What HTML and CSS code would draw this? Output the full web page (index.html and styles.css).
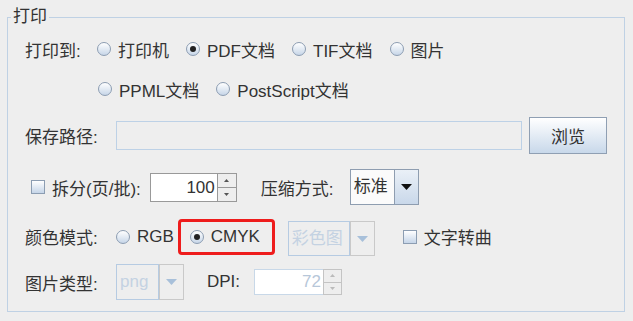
FILE: index.html
```html
<!DOCTYPE html>
<html lang="zh-CN">
<head>
  <meta charset="UTF-8">
  <title>打印</title>
  <link rel="stylesheet" href="styles.css">
</head>
<body>
  <fieldset class="print-box">
    <legend>打印</legend>

    <div class="row row-target">
      <span class="label label-target">打印到:</span>
      <label class="opt"><span class="radio"></span>打印机</label>
      <label class="opt"><span class="radio on"></span>PDF文档</label>
      <label class="opt"><span class="radio"></span>TIF文档</label>
      <label class="opt"><span class="radio"></span>图片</label>
    </div>

    <div class="row row-target2">
      <label class="opt"><span class="radio"></span>PPML文档</label>
      <label class="opt"><span class="radio"></span>PostScript文档</label>
    </div>

    <div class="row row-path">
      <span class="label">保存路径:</span>
      <div class="path-field"></div>
      <button class="btn-browse">浏览</button>
    </div>

    <div class="row row-split">
      <label class="opt opt-check"><span class="check"></span>拆分(页/批):</label>
      <div class="spinner spinner-split">
        <div class="spin-field">100</div>
        <div class="spin-btns">
          <span class="spin-up"><svg width="5" height="3" viewBox="0 0 5 3"><path d="M0 3 L2.5 0 L5 3 Z" fill="#555"/></svg></span>
          <span class="spin-down"><svg width="5" height="3" viewBox="0 0 5 3"><path d="M0 0 L2.5 3 L5 0 Z" fill="#555"/></svg></span>
        </div>
      </div>
      <span class="label label-zip">压缩方式:</span>
      <div class="combo combo-zip">
        <div class="combo-text">标准</div>
        <div class="combo-arrow"><svg width="11" height="6" viewBox="0 0 11 6"><path d="M0 0 L11 0 L5.5 6 Z" fill="#111"/></svg></div>
      </div>
    </div>

    <div class="row row-color">
      <span class="label">颜色模式:</span>
      <label class="opt opt-rgb"><span class="radio"></span>RGB</label>
      <div class="mark">
        <label class="opt"><span class="radio on"></span>CMYK</label>
      </div>
      <div class="combo combo-off combo-color">
        <div class="combo-text">彩色图</div>
        <div class="combo-arrow"><svg width="11" height="6" viewBox="0 0 11 6"><path d="M0 0 L11 0 L5.5 6 Z" fill="#a8c0da"/></svg></div>
      </div>
      <label class="opt opt-curve"><span class="check"></span>文字转曲</label>
    </div>

    <div class="row row-image">
      <span class="label">图片类型:</span>
      <div class="combo combo-off combo-png">
        <div class="combo-text">png</div>
        <div class="combo-arrow"><svg width="11" height="6" viewBox="0 0 11 6"><path d="M0 0 L11 0 L5.5 6 Z" fill="#a8c0da"/></svg></div>
      </div>
      <span class="label label-dpi">DPI:</span>
      <div class="spinner spinner-off">
        <div class="spin-field">72</div>
        <div class="spin-btns">
          <span class="spin-up"><svg width="5" height="3" viewBox="0 0 5 3"><path d="M0 3 L2.5 0 L5 3 Z" fill="#bbb"/></svg></span>
          <span class="spin-down"><svg width="5" height="3" viewBox="0 0 5 3"><path d="M0 0 L2.5 3 L5 0 Z" fill="#bbb"/></svg></span>
        </div>
      </div>
    </div>
  </fieldset>
</body>
</html>
```

FILE: styles.css
```css
body {
  margin: 0;
  background: #eeeeee;
  font-family: "Liberation Sans", "Noto Sans CJK SC", sans-serif;
  font-size: 17px;
  color: #333333;
}
.print-box {
  box-sizing: border-box;
  width: 618px;
  margin: 7px 0 0 7px;
  padding: 0 0 11px 0;
  border: 1px solid #bfd1e4;
  min-inline-size: 0;
}
.print-box legend {
  margin-left: 3px;
  padding: 0 2px;
  line-height: 20px;
}
.row {
  display: flex;
  align-items: center;
  padding-left: 17px;
  white-space: nowrap;
}
.label {
  width: 91px;
  flex: none;
}
.row-target {
  height: 28px;
  margin-top: 8px;
}
.label-target {
  width: 72px;
}
.row-target2 {
  height: 28px;
  margin-top: 12px;
  padding-left: 90px;
}
.opt {
  display: flex;
  align-items: center;
  margin-right: 17px;
}
.radio {
  box-sizing: border-box;
  width: 14px;
  height: 14px;
  margin-right: 7px;
  border-radius: 50%;
  border: 1px solid #8c9db2;
  background: linear-gradient(#ffffff, #c7d6e8);
  display: flex;
  align-items: center;
  justify-content: center;
}
.radio.on::after {
  content: "";
  width: 6px;
  height: 6px;
  border-radius: 50%;
  background: #222;
}
.check {
  box-sizing: border-box;
  width: 14px;
  height: 14px;
  margin-right: 7px;
  border: 1px solid #8c9db2;
  background: linear-gradient(#ffffff, #c5d5e8);
}
.row-path {
  height: 37px;
  margin-top: 14px;
}
.path-field {
  box-sizing: border-box;
  width: 406px;
  height: 29px;
  border: 1px solid #bdd1e6;
}
.btn-browse {
  box-sizing: border-box;
  width: 78px;
  height: 37px;
  margin-left: 7px;
  padding: 0;
  border: 1px solid #8f9fb3;
  background: linear-gradient(#ffffff, #c8d8ea);
  font: inherit;
  color: #333;
}
.row-split {
  height: 36px;
  margin-top: 15px;
}
.opt-check {
  margin-left: 6px;
  margin-right: 0;
}
.spinner {
  display: flex;
  margin-left: 9px;
}
.spin-field {
  box-sizing: border-box;
  width: 67px;
  height: 29px;
  padding-right: 2px;
  border: 1px solid #999;
  border-right: none;
  background: #fff;
  text-align: right;
  line-height: 27px;
}
.spin-btns {
  display: flex;
  flex-direction: column;
  width: 20px;
}
.spin-btns span {
  box-sizing: border-box;
  flex: 1;
  border: 1px solid #999;
  background: #eee;
  display: flex;
  align-items: center;
  justify-content: center;
}
.spin-btns .spin-down {
  border-top: none;
}
.label-zip {
  width: 89px;
  margin-left: 24px;
}
.combo {
  box-sizing: border-box;
  display: flex;
  height: 36px;
  border: 1px solid #8e9db0;
}
.combo-text {
  flex: 1;
  padding-left: 3px;
  background: #fbfbfb;
  line-height: 34px;
}
.combo-arrow {
  width: 23px;
  border-left: 1px solid #8e9db0;
  background: linear-gradient(#eaf0f7, #c9d8ea);
  display: flex;
  align-items: center;
  justify-content: center;
}
.combo-zip {
  width: 69px;
}
.combo-off {
  border-color: #c9c9c9;
}
.combo-off .combo-text {
  background: transparent;
  color: #c4d2e2;
  border: 1px solid #b6cbe2;
  margin: -1px 0 -1px -1px;
  line-height: 33px;
}
.combo-off .combo-arrow {
  border-left: 1px solid #c9c9c9;
  background: #eeeeee;
}
.row-color {
  height: 39px;
  margin-top: 12px;
}
.opt-rgb {
  margin-right: 4px;
}
.mark {
  box-sizing: border-box;
  width: 97px;
  height: 36px;
  padding-left: 9px;
  border: 3px solid #ee1c1c;
  border-radius: 4px;
  display: flex;
  align-items: center;
}
.combo-color {
  width: 87px;
  height: 35px;
  margin: 4px 0 0 13px;
}
.opt-curve {
  margin-left: 28px;
}
.row-image {
  height: 36px;
  margin-top: 8px;
}
.combo-png {
  width: 68px;
}
.label-dpi {
  width: 47px;
  margin-left: 23px;
}
.spinner-off {
  margin-left: 0;
}
.spinner-off .spin-field {
  width: 69px;
  height: 26px;
  line-height: 24px;
  border-color: #c8d8e8;
  color: #b7c7d9;
}
.spinner-off .spin-btns {
  width: 19px;
}
.spinner-off .spin-btns span {
  border-color: #c4c4c4;
}
```
